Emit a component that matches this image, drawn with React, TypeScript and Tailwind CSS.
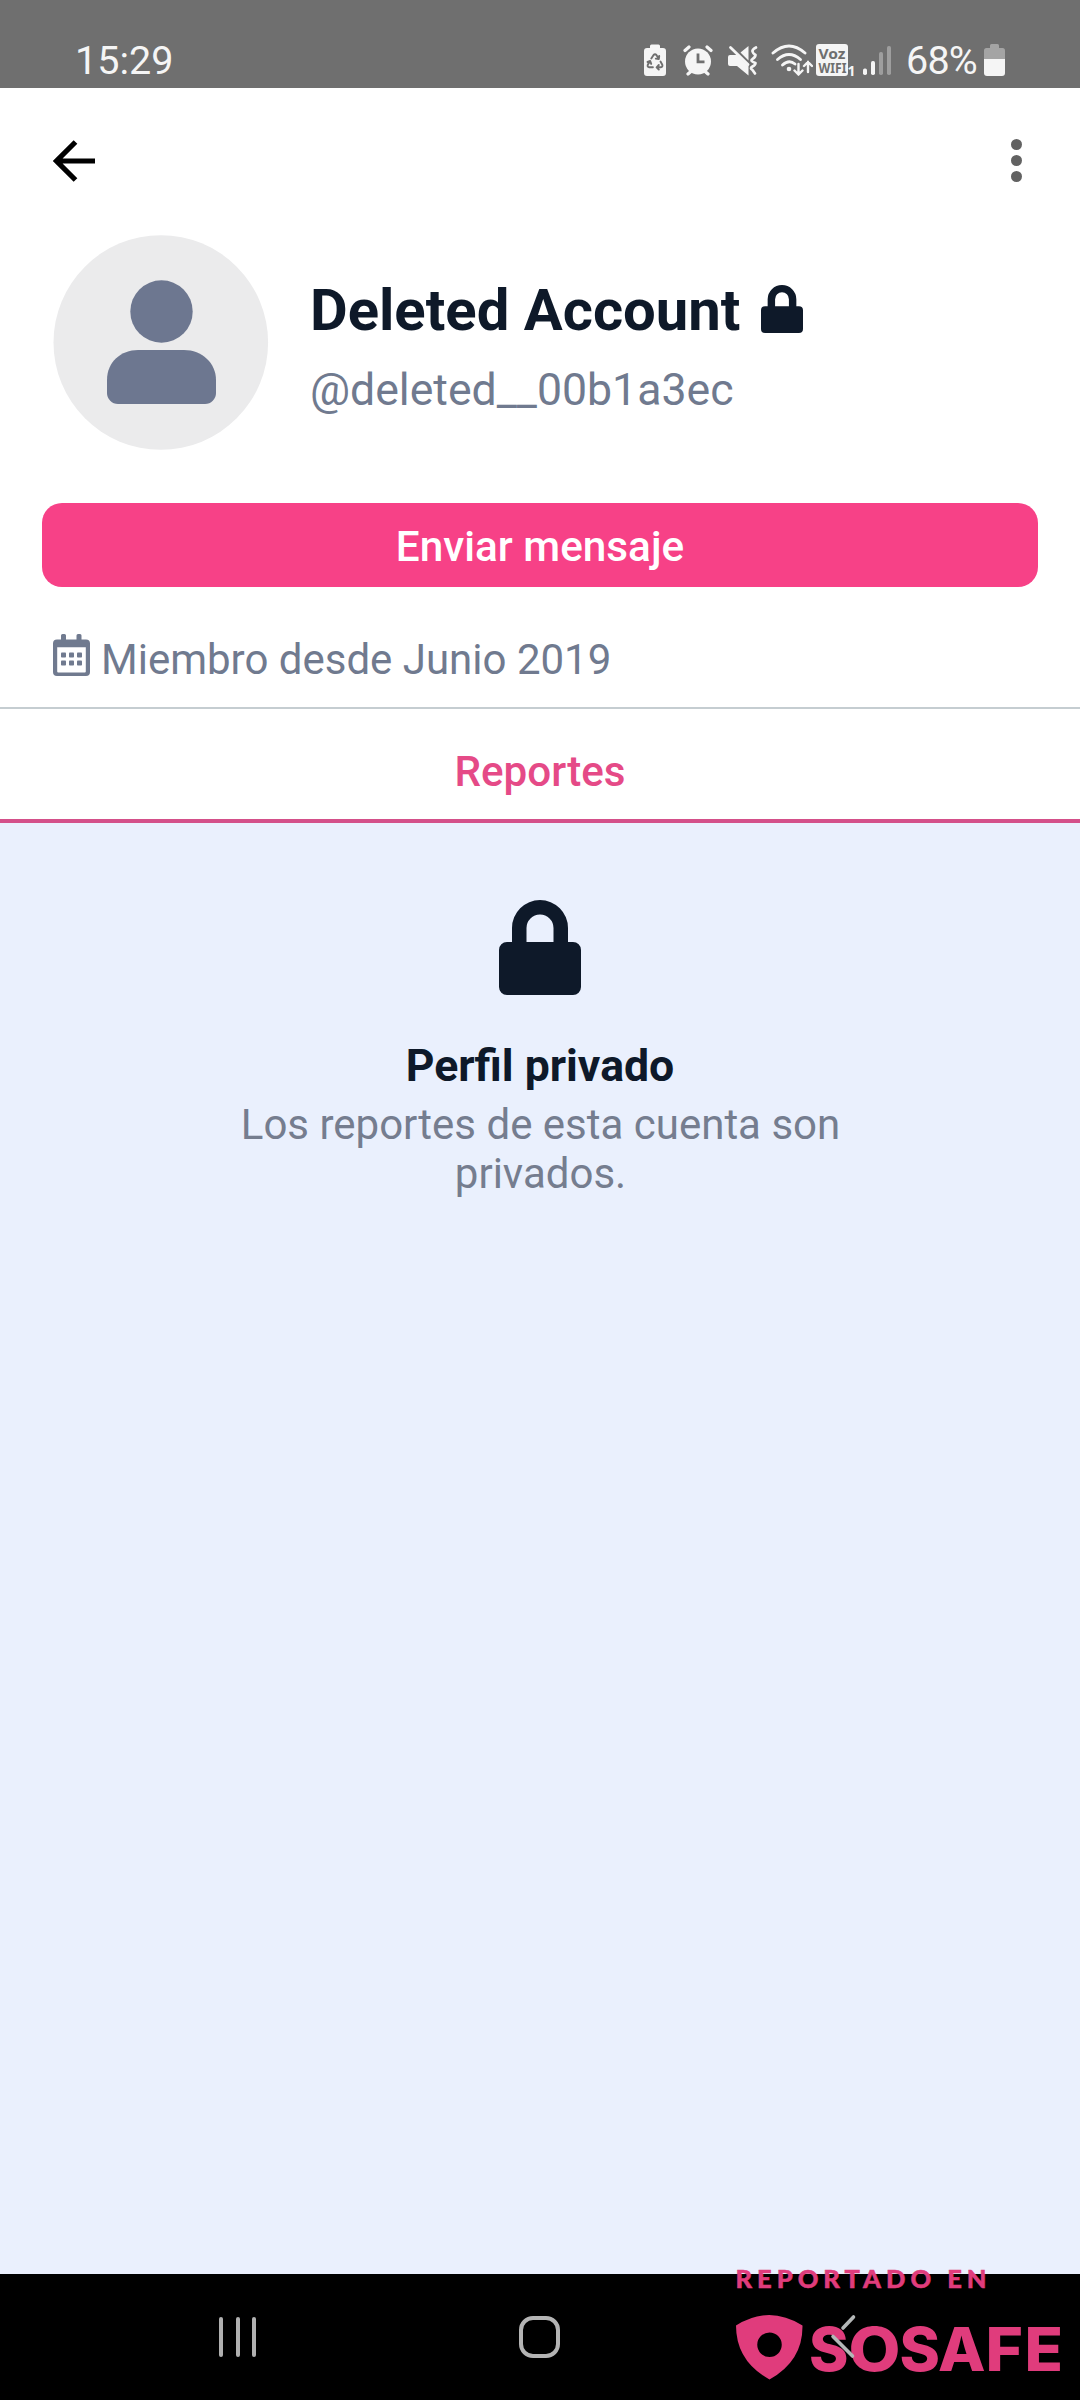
import React from "react";

function StatusIcons() {
  return (
    <div className="flex h-8 items-center text-[#f5f5f5]">
      <svg width="22" height="32" viewBox="0 0 22 32" className="mr-[17px]">
        <path fill="currentColor" d="M6 2a1.500 1.500 0 0 1 1.500-1.500h7A1.500 1.500 0 0 1 16 2v2h3a3 3 0 0 1 3 3v22a3 3 0 0 1-3 3H3a3 3 0 0 1-3-3V7a3 3 0 0 1 3-3h3z" />
        <g fill="none" stroke="#6f6f6f" strokeWidth="1.900" strokeLinejoin="round" strokeLinecap="round">
          <path d="M7.300 14.500 9.600 11q1.400-1.500 2.800 0l2.300 3.700M15.200 12l-.4 3-3-.4" />
          <path d="m16.500 17.500 1.800 3.200q.6 2.200-1.500 2.600H13M14.800 21l-2.200 2.300 2.200 2.200" />
          <path d="M8.900 23.300H5.300q-2.200-.4-1.500-2.600l2-3.500M3.500 18l2.700-1 1 2.900" />
        </g>
      </svg>
      <svg width="30" height="32" viewBox="0 0 30 32" className="mr-[15px]">
        <circle cx="15" cy="17.500" r="13" fill="currentColor" />
        <path d="M2 6.500 6 3M28 6.500 24 3M5 30l3.500-3M25 30l-3.500-3" stroke="currentColor" strokeWidth="3.200" strokeLinecap="round" />
        <path d="M15 9.500v8.300h6.500" fill="none" stroke="#6f6f6f" strokeWidth="2.800" />
      </svg>
      <svg width="30" height="32" viewBox="0 0 30 32" className="mr-[13px]">
        <path fill="currentColor" d="M2 11h7L20.500 22v9.500L9 22H2a2 2 0 0 1-2-2v-7a2 2 0 0 1 2-2zM12.500 8.500 20.500 2v14.500z" />
        <path d="M2.500 3.500 20 20.500" stroke="currentColor" strokeWidth="2.800" strokeLinecap="round" />
        <path d="M28 3.500q-4 2-3.500 4t3 3.500q0 2-3 4t3 4q0 2-3 3.500t0 3.500l2.500 3.500" fill="none" stroke="currentColor" strokeWidth="2.700" strokeLinecap="round" strokeLinejoin="round" />
      </svg>
      <svg width="42" height="32" viewBox="0 0 42 32" className="mr-[3px]">
        <g fill="none" stroke="currentColor" strokeWidth="2.900" strokeLinecap="round">
          <path d="M2 9Q18-5 34 9" />
          <path d="M6.500 15.500q11.500-10 23 0" />
          <path d="M11.500 21Q18 15 24 20" />
          <path d="M27.500 20v10.500m-4-4 4 4 4-4M37 28V18m-4 4 4-4 4 4" strokeWidth="2.400" />
        </g>
        <circle cx="18" cy="25" r="2.300" fill="currentColor" />
      </svg>
      <svg width="39" height="32" viewBox="0 0 39 32" className="mr-2 overflow-visible">
        <rect width="32" height="32" rx="3" fill="currentColor" />
        <text x="2.500" y="15.300" fontSize="15" fontWeight="700" fontFamily="Noto Sans, sans-serif" fill="#6f6f6f" textLength="27" lengthAdjust="spacingAndGlyphs">Voz</text>
        <text x="2.500" y="29" fontSize="13.500" fontWeight="700" fontFamily="Noto Sans, sans-serif" fill="#6f6f6f" textLength="28" lengthAdjust="spacingAndGlyphs">WIFI</text>
        <text x="31.500" y="31.500" fontSize="14" fontWeight="700" fontFamily="Noto Sans, sans-serif" fill="currentColor" textLength="8" lengthAdjust="spacingAndGlyphs">1</text>
      </svg>
      <svg width="28" height="32" viewBox="0 0 28 32" className="mr-[15px]">
        <g fill="currentColor">
          <rect x="0" y="24.500" width="4" height="6.500" rx="1.700" />
          <rect x="8" y="17" width="4" height="14" rx="1.700" />
          <rect x="16" y="8" width="4" height="23" rx="1.700" opacity=".35" />
          <rect x="24" y="2" width="4" height="29" rx="1.700" opacity=".35" />
        </g>
      </svg>
      <span className="w-[78px] pt-[2px] text-[39.5px] leading-8 tracking-[-0.8px]">68%</span>
      <svg width="21" height="32" viewBox="0 0 21 32">
        <path fill="#a4a4a4" d="M6 1.500A1.500 1.500 0 0 1 7.500 0h6A1.500 1.500 0 0 1 15 1.500V4h3.500A2.500 2.500 0 0 1 21 6.500V16H0V6.500A2.500 2.500 0 0 1 2.500 4H6z" />
        <path fill="currentColor" d="M0 15h21v14a3 3 0 0 1-3 3H3a3 3 0 0 1-3-3z" />
      </svg>
    </div>
  );
}

function Lock({ className }: { className: string }) {
  return (
    <svg viewBox="0 0 82 95" preserveAspectRatio="none" className={className}>
      <path
        fill="#0e1929"
        fillRule="evenodd"
        d="M13 42V28a28 28 0 0 1 56 0v14h5a8 8 0 0 1 8 8v37a8 8 0 0 1-8 8H8a8 8 0 0 1-8-8V50a8 8 0 0 1 8-8zM27.500 42h27V28a13.500 13.500 0 0 0-27 0z"
      />
    </svg>
  );
}

function Calendar() {
  return (
    <svg width="37" height="42" viewBox="0 0 37 42" fill="#707a8f">
      <path
        fillRule="evenodd"
        d="M8 1.500A1.500 1.500 0 0 1 9.500 0h2A1.500 1.500 0 0 1 13 1.500V5.500h10.500v-4A1.500 1.500 0 0 1 25 0h2a1.500 1.500 0 0 1 1.500 1.500V5.500H33a4 4 0 0 1 4 4V38a4 4 0 0 1-4 4H4a4 4 0 0 1-4-4V9.500a4 4 0 0 1 4-4h4zM4.200 13.200V37.500q0 1 1 1h26.600q1 0 1-1V13.200z"
      />
      {[18.5, 26.500].map((y) =>
        [8, 16, 24].map((x) => <rect key={`${x}-${y}`} x={x} y={y} width="5" height="5" rx=".8" />)
      )}
    </svg>
  );
}

function Brand() {
  return (
    <svg width="340" height="130" viewBox="730 2260 340 130" className="absolute right-[10px] top-[-14px]">
      <path
        fill="#e03c7c"
        fillRule="evenodd"
        d="M736 2325.500Q769 2304.500 802.500 2325.500Q803 2361 769.500 2379.500Q736 2361 736 2325.500zM769.500 2332.500a12 12 0 1 0 0 24.500a12 12 0 1 0 0-24.500z"
      />
      <text x="735.500" y="2288" fontSize="25.500" fontWeight="900" fontFamily="Lato, sans-serif" fill="#e03c7c" stroke="#e03c7c" strokeWidth=".5" textLength="251">
        REPORTADO EN
      </text>
      <g fontSize="60.500" fontWeight="800" fontFamily="Inter, sans-serif" fill="#e03c7c">
        <text x="809" y="2371" textLength="39.500" lengthAdjust="spacingAndGlyphs">S</text>
        <text x="848.500" y="2371" textLength="52" lengthAdjust="spacingAndGlyphs">O</text>
        <text x="899.500" y="2371" textLength="40.500" lengthAdjust="spacingAndGlyphs">S</text>
        <text x="938" y="2371" textLength="47.500" lengthAdjust="spacingAndGlyphs">A</text>
        <text x="985.500" y="2371" textLength="37.500" lengthAdjust="spacingAndGlyphs">F</text>
        <text x="1024.500" y="2371" textLength="38.500" lengthAdjust="spacingAndGlyphs">E</text>
      </g>
      <path d="M853.500 2317 843 2328M833 2336.500 852.500 2356" stroke="#b4b7b7" strokeWidth="3.600" strokeLinecap="round" />
    </svg>
  );
}

export default function App() {
  return (
    <div className="flex h-[2400px] w-[1080px] flex-col overflow-hidden bg-white font-['Roboto',sans-serif]">
      <div className="flex h-[88px] justify-between bg-[#6f6f6f] pl-[75px] pr-[75px] pt-11">
        <span className="pt-px text-[39.5px] leading-8 text-[#f5f5f5]">15:29</span>
        <StatusIcons />
      </div>

      <div className="flex h-[147px] items-start justify-between pl-[53px] pr-[58px] pt-[52px]">
        <svg width="42" height="42" viewBox="0 0 42 42" fill="none" stroke="#000" strokeWidth="5.200">
          <path d="M22.500 2 3.500 21l19 19M3.500 21H42" />
        </svg>
        <div className="-mt-px flex w-[11px] flex-col gap-[5px]">
          <span className="size-[11px] rounded-full bg-[#626262]" />
          <span className="size-[11px] rounded-full bg-[#626262]" />
          <span className="size-[11px] rounded-full bg-[#626262]" />
        </div>
      </div>

      <div className="flex h-[268px] items-start pl-[53px]">
        <svg width="216" height="215" viewBox="0 0 216 215">
          <circle cx="107.800" cy="107.500" r="107.300" fill="#ebebec" />
          <circle cx="108.500" cy="76.500" r="31.200" fill="#6d7790" />
          <path fill="#6d7790" d="M54 145c0-18 14-30 31-30h46c18 0 32 13 32 30v13a11 11 0 0 1-11 11H65a11 11 0 0 1-11-11z" />
        </svg>
        <div className="flex flex-col pl-[41px] pt-10">
          <div className="flex items-start">
            <h1 className="w-[451px] whitespace-nowrap text-[58px] font-bold leading-[70px] text-[#0e1929]">Deleted Account</h1>
            <Lock className="mt-[10px] h-12 w-[42px]" />
          </div>
          <p className="mt-[18px] text-[44.6px] leading-[54px] text-[#707a8f]">@deleted__00b1a3ec</p>
        </div>
      </div>

      <button className="mx-[42px] h-[84px] shrink-0 rounded-[20px] bg-[#f74187] pt-[3px] text-[42.3px] font-medium leading-[81px] text-white">
        Enviar mensaje
      </button>

      <div className="flex h-[122px] items-start border-b-2 border-[#c5cdd1] pl-[53px] pt-[47px]">
        <Calendar />
        <span className="ml-[11px] mt-px text-[42px] leading-[50px] text-[#707a8f]">Miembro desde Junio 2019</span>
      </div>

      <div className="h-[114px] border-b-4 border-[#d4508a] pt-[38px] text-center text-[42.2px] font-medium leading-[50px] text-[#e54a87]">
        Reportes
      </div>

      <main className="flex flex-1 flex-col items-center bg-[#eaf0fd] pt-[77px] text-center">
        <Lock className="h-[95px] w-[82px]" />
        <h2 className="mt-11 text-[44.6px] font-bold leading-[54px] text-[#0e1929]">Perfil privado</h2>
        <p className="mt-[7px] w-[640px] pl-px text-[42px] leading-[49px] text-[#757d8f]">Los reportes de esta cuenta son privados.</p>
      </main>

      <nav className="relative flex h-[126px] items-start bg-black pt-[42px]">
        <div className="ml-[219px] flex gap-[12.5px] pt-[1px]">
          <span className="h-10 w-1 rounded-full bg-[#b0b0b0]" />
          <span className="h-10 w-1 rounded-full bg-[#b0b0b0]" />
          <span className="h-10 w-1 rounded-full bg-[#b0b0b0]" />
        </div>
        <div className="ml-[263px] h-[42px] w-[41px] rounded-[14px] border-4 border-[#b4b4b4]" />
        <Brand />
      </nav>
    </div>
  );
}
